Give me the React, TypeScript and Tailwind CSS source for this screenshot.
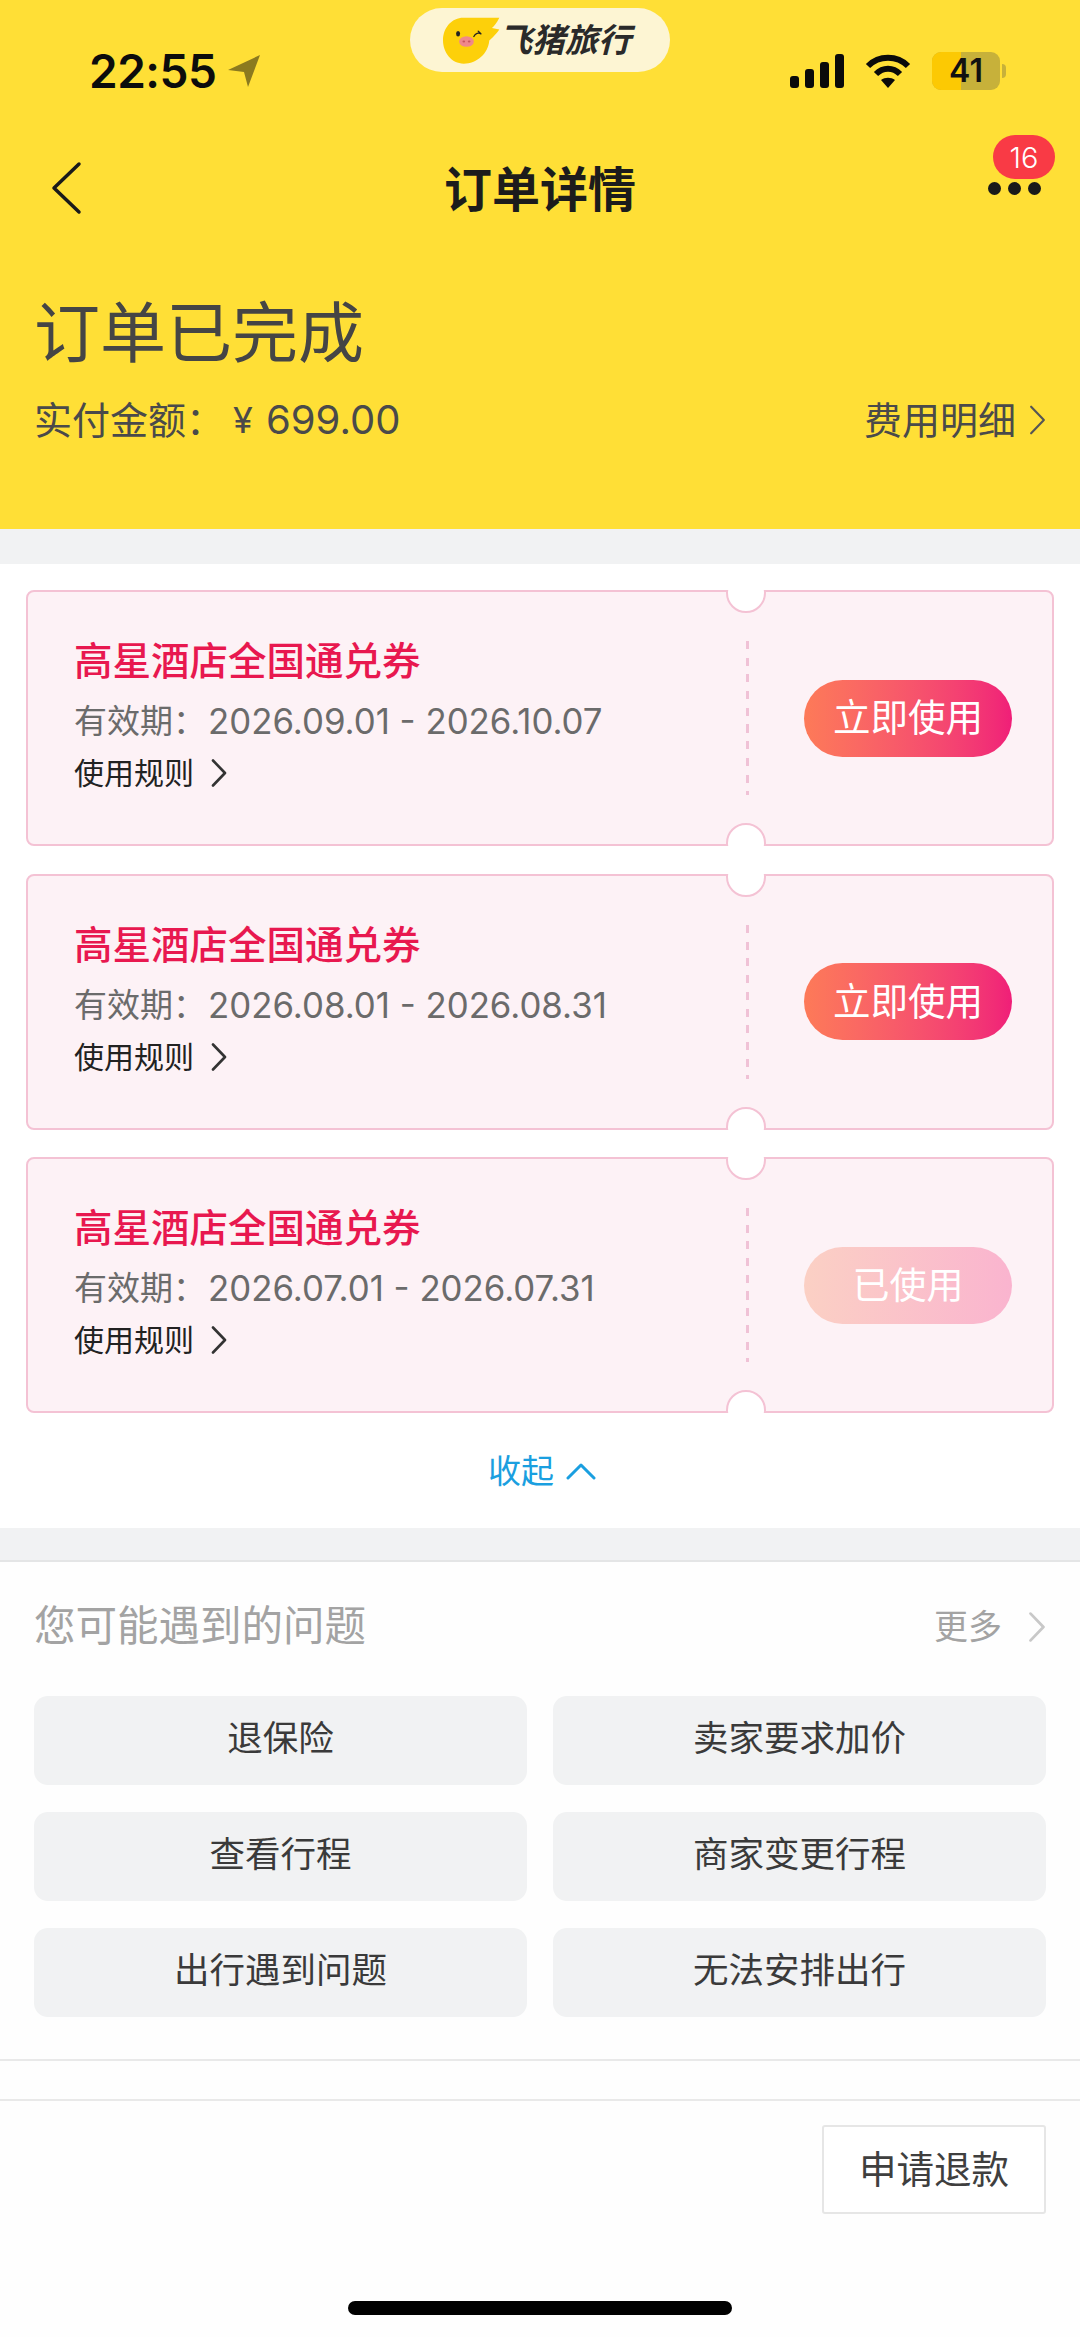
import React from "react";

const FONT = 'font-["Inter","Noto_Sans_CJK_SC",sans-serif]';

function ChevronRight({ className, color, width = 2.5 }: { className: string; color: string; width?: number }) {
  return (
    <svg className={className} viewBox="0 0 16 28" fill="none">
      <polyline points="2,1.5 14,14 2,26.5" stroke={color} strokeWidth={width} strokeLinecap="round" strokeLinejoin="round" />
    </svg>
  );
}

function Logo() {
  return (
    <svg className="w-[57px] h-[47px] flex-none" viewBox="0 0 170 140">
      <path d="M60 2 L168 2 C160 18 152 28 146 33 L168 37 C155 55 145 64 138 70 C135 110 100 139 62 139 C25 139 0 105 0 70 C0 30 28 2 60 2Z" fill="#fdd00a" />
      <ellipse cx="45" cy="50" rx="6" ry="8" fill="#222" />
      <path d="M92 58 C97 48 106 46 113 50 M105 42 L113 50" stroke="#222" strokeWidth="4" fill="none" strokeLinecap="round" />
      <ellipse cx="70" cy="73" rx="22" ry="16" fill="#f0888a" />
      <ellipse cx="62" cy="73" rx="4" ry="3" fill="#c9575c" />
      <ellipse cx="78" cy="73" rx="4" ry="3" fill="#c9575c" />
    </svg>
  );
}

function StatusBar() {
  return (
    <div className="relative h-[135px] flex-none">
      <div className="absolute left-[410px] top-[8px] w-[260px] h-[64px] rounded-full bg-[#fdf5d3] flex items-center pl-[33px]">
        <Logo />
        <span className="ml-[-1px] text-[33px] leading-none font-semibold italic text-[#2a2a2a] whitespace-nowrap">飞猪旅行</span>
      </div>
      <div className="flex items-start justify-between pt-[52px] pl-[89px] pr-[74px]">
        <div className="flex items-center h-[38px]">
          <span className="text-[46px] font-semibold leading-none text-[#0c0c0c] tracking-[-0.5px]">22:55</span>
          <svg className="w-[34px] h-[34px] ml-[11px]" viewBox="0 0 34 34">
            <path d="M33 1 L21 33 L17 18 L1 16 Z" fill="#8b7a1f" />
          </svg>
        </div>
        <div className="flex items-center h-[38px]">
          <svg className="w-[54px] h-[34px]" viewBox="0 0 54 34" fill="#0a0a0a">
            <rect x="0" y="22" width="9" height="12" rx="3" />
            <rect x="15" y="15" width="9" height="19" rx="3" />
            <rect x="30" y="8" width="9" height="26" rx="3" />
            <rect x="45" y="0" width="9" height="34" rx="3" />
          </svg>
          <svg className="w-[46px] h-[35px] ml-[21px]" viewBox="0 0 46 35" fill="none" stroke="#0a0a0a" strokeWidth="6">
            <path d="M3 12 C14 1 32 1 43 12" />
            <path d="M11 20 C18 13 28 13 35 20" />
            <path d="M23 34 L16 26 C20 23 26 23 30 26 Z" fill="#0a0a0a" stroke="none" />
          </svg>
          <div className="relative ml-[21px] w-[68px] h-[38px] rounded-[9px] overflow-hidden bg-[#c7b13a] flex items-center justify-center">
            <div className="absolute left-0 top-0 bottom-0 w-[29px] bg-[#fcc903]" />
            <span className="relative text-[32px] font-semibold leading-none text-[#111]">41</span>
          </div>
          <div className="ml-[2px] w-[4px] h-[14px] rounded-r-full bg-[#c7b13a]" />
        </div>
      </div>
    </div>
  );
}

function NavBar() {
  return (
    <div className="relative h-[110px] flex-none flex items-center justify-center">
      <svg className="absolute left-[50px] top-[26px] w-[32px] h-[54px]" viewBox="0 0 32 54" fill="none">
        <polyline points="29,3 4,27 29,51" stroke="#1a1a1a" strokeWidth="3.5" strokeLinecap="round" strokeLinejoin="round" />
      </svg>
      <span className="text-[48px] font-bold leading-none text-[#1c1c1c]">订单详情</span>
      <div className="absolute left-[988px] top-[47px] flex gap-[7px]">
        <span className="w-[13px] h-[13px] rounded-full bg-[#1a1a1a]" />
        <span className="w-[13px] h-[13px] rounded-full bg-[#1a1a1a]" />
        <span className="w-[13px] h-[13px] rounded-full bg-[#1a1a1a]" />
      </div>
      <div className="absolute left-[993px] top-0 w-[62px] h-[44px] rounded-full bg-[#f93a45] flex items-center justify-center text-white text-[29px] font-light leading-none">16</div>
    </div>
  );
}

function Notch({ side }: { side: "top" | "bottom" }) {
  return side === "top" ? (
    <div className="absolute left-[698px] top-[-2px] w-[40px] h-[24px] overflow-hidden">
      <div className="absolute left-0 top-[-17px] w-[40px] h-[40px] rounded-full bg-white border-2 border-[#f4c2d4]" />
    </div>
  ) : (
    <div className="absolute left-[698px] bottom-[-2px] w-[40px] h-[24px] overflow-hidden">
      <div className="absolute left-0 bottom-[-17px] w-[40px] h-[40px] rounded-full bg-white border-2 border-[#f4c2d4]" />
    </div>
  );
}

function Ticket({ date, label, used }: { date: string; label: string; used?: boolean }) {
  return (
    <div className="relative h-[256px] rounded-[8px] border-2 border-[#f4c2d4] bg-[#fdf2f6] flex items-center">
      <Notch side="top" />
      <Notch side="bottom" />
      <div className="w-[718px] flex-none pl-[46px] flex flex-col pb-[6px]">
        <div className="h-[48px] leading-[48px] text-[38.5px] font-medium text-[#e8184f] whitespace-nowrap">高星酒店全国通兑券</div>
        <div className="mt-[13px] h-[46px] leading-[46px] text-[#6b6b6b] whitespace-nowrap flex">
          <span className="text-[33px] w-[134px]">有效期：</span>
          <span className="text-[34.8px]">{date}</span>
        </div>
        <div className="mt-[9px] h-[40px] flex items-center text-[#222]">
          <span className="text-[30px] leading-none">使用规则</span>
          <ChevronRight className="w-[16px] h-[28px] ml-[17px]" color="#333" width={2.6} />
        </div>
      </div>
      <div className="w-[3px] h-[154px] flex-none bg-[repeating-linear-gradient(to_bottom,#f0c2d6_0,#f0c2d6_8px,transparent_8px,transparent_16.7px)]" />
      <div
        className={
          used
            ? "ml-[55px] w-[208px] h-[77px] rounded-full bg-gradient-to-r from-[#fbd0c4] to-[#fab4cf] flex items-center justify-center text-white text-[37px] leading-none"
            : "ml-[55px] w-[208px] h-[77px] rounded-full bg-gradient-to-r from-[#fd7a58] to-[#f01e78] flex items-center justify-center text-white text-[37.5px] leading-none"
        }
      >
        {label}
      </div>
    </div>
  );
}

function QA({ text }: { text: string }) {
  return (
    <div className="h-[89px] pb-[3px] rounded-[14px] bg-[#f1f2f3] flex items-center justify-center text-[35.5px] leading-none text-[#3a3a3a]">{text}</div>
  );
}

export default function App() {
  return (
    <div className={`${FONT} w-[1080px] h-[2337px] bg-[#fefefe] flex flex-col overflow-hidden`}>
      <div className="h-[529px] flex-none bg-[#ffdf36] flex flex-col">
        <StatusBar />
        <NavBar />
        <div className="px-[34px] pt-[50px]">
          <div className="text-[66px] leading-[76px] text-[#454545]">订单已完成</div>
          <div className="mt-[27px] h-[44px] flex items-center justify-between text-[#4a4a4a]">
            <div className="flex items-center">
              <span className="text-[38px] leading-none w-[199px]">实付金额：</span>
              <span className="text-[36px] leading-none w-[33px]">¥</span>
              <span className="text-[40px] leading-none">699.00</span>
            </div>
            <div className="flex items-center">
              <span className="text-[38px] leading-none">费用明细</span>
              <ChevronRight className="w-[17px] h-[30px] ml-[13px]" color="#555" width={2} />
            </div>
          </div>
        </div>
      </div>

      <div className="h-[35px] flex-none bg-[#f1f2f3]" />

      <div className="h-[964px] flex-none px-[26px] pt-[26px] bg-white flex flex-col">
        <div className="flex flex-col gap-[27.5px]">
          <Ticket date="2026.09.01 - 2026.10.07" label="立即使用" />
          <Ticket date="2026.08.01 - 2026.08.31" label="立即使用" />
          <Ticket date="2026.07.01 - 2026.07.31" label="已使用" used />
        </div>
        <div className="mt-[34px] h-[48px] flex items-center justify-center pl-[4px] text-[#1a9fe0]">
          <span className="text-[33px] leading-none">收起</span>
          <svg className="w-[30px] h-[18px] ml-[12px]" viewBox="0 0 30 18" fill="none">
            <polyline points="2,16 15,3 28,16" stroke="#1a9fe0" strokeWidth="3" strokeLinecap="round" strokeLinejoin="round" />
          </svg>
        </div>
      </div>

      <div className="h-[34px] flex-none bg-[#f1f2f3] border-b-2 border-[#e4e5e6]" />

      <div className="px-[34px] pt-[33px]">
        <div className="h-[64px] flex items-center justify-between">
          <span className="text-[41.5px] leading-none text-[#a3a3a3]">您可能遇到的问题</span>
          <div className="flex items-center">
            <span className="text-[34px] leading-none text-[#a3a3a3]">更多</span>
            <ChevronRight className="w-[18px] h-[30px] ml-[26px]" color="#c8c8c8" width={2.6} />
          </div>
        </div>
        <div className="mt-[37px] grid grid-cols-2 gap-x-[26px] gap-y-[27px]">
          <QA text="退保险" />
          <QA text="卖家要求加价" />
          <QA text="查看行程" />
          <QA text="商家变更行程" />
          <QA text="出行遇到问题" />
          <QA text="无法安排出行" />
        </div>
      </div>

      <div className="mt-[42px] h-[42px] flex-none border-y-2 border-[#e9e9e9]" />

      <div className="flex justify-end pr-[34px] pt-[24px]">
        <div className="w-[224px] h-[89px] rounded-[3px] border-2 border-[#e6e6e6] bg-white flex items-center justify-center text-[37.5px] leading-none text-[#3f3f3f]">申请退款</div>
      </div>

      <div className="mt-[87px] mx-auto w-[384px] h-[14px] rounded-full bg-black" />
    </div>
  );
}
